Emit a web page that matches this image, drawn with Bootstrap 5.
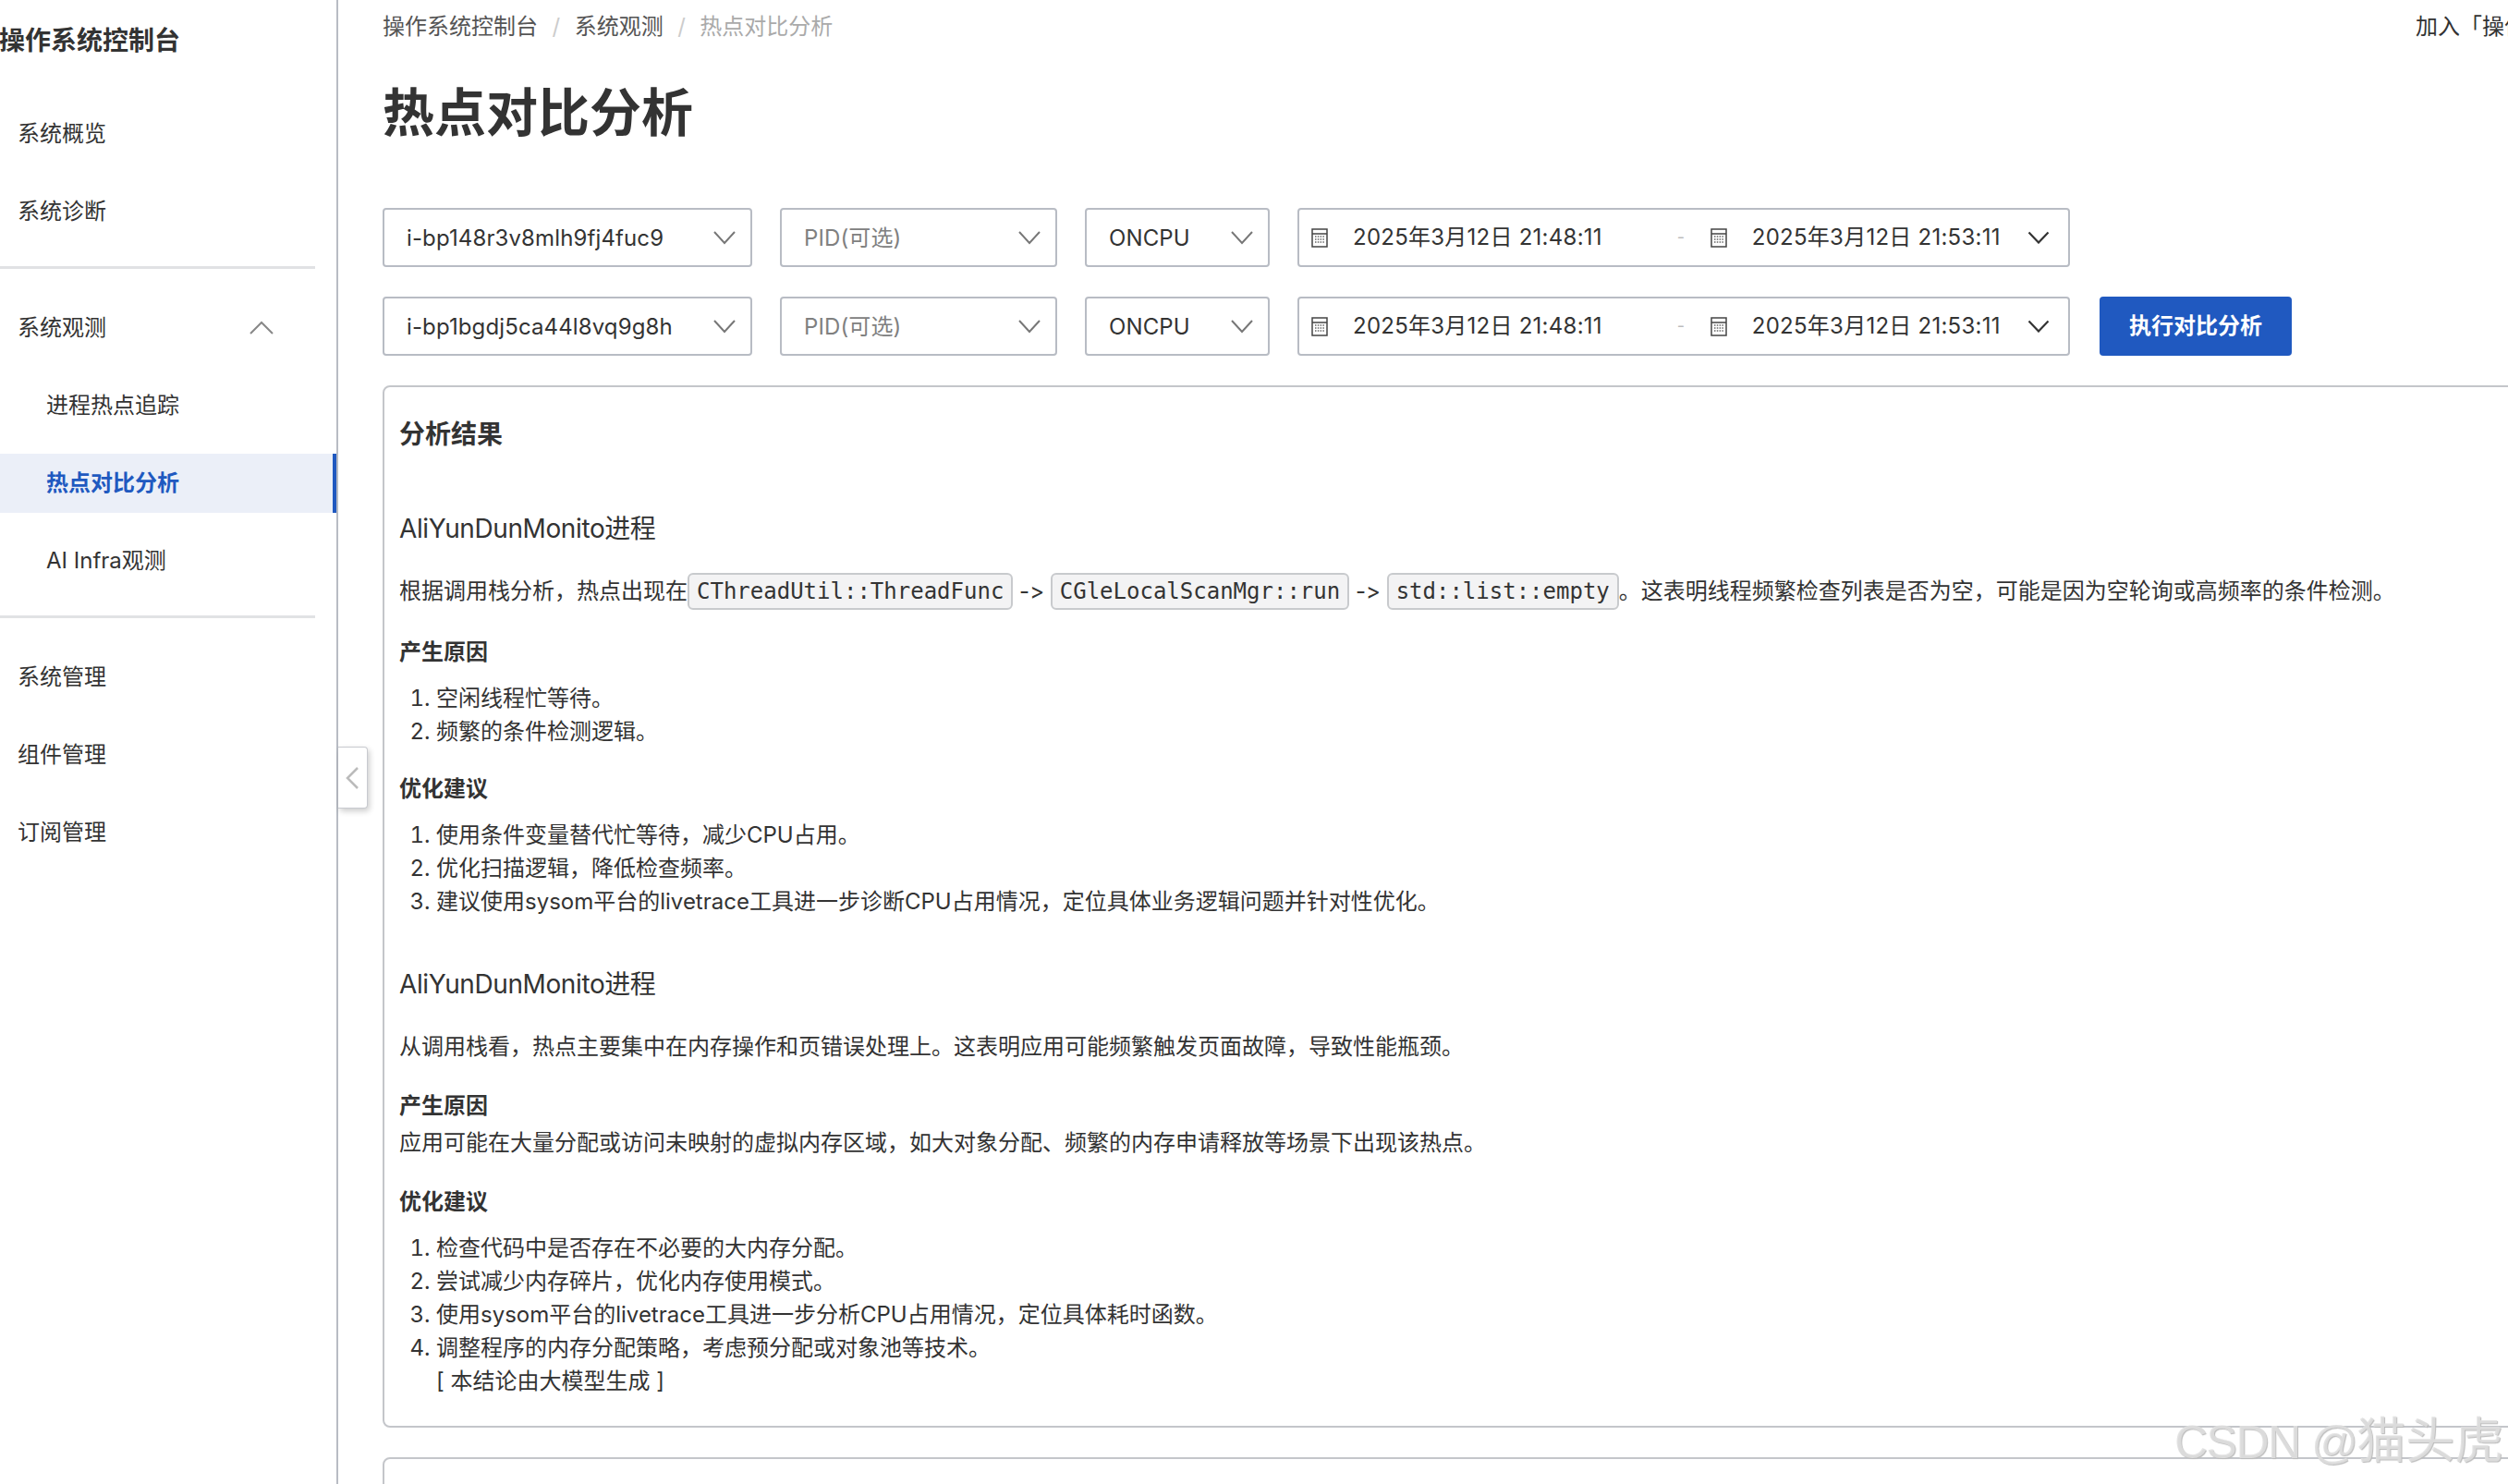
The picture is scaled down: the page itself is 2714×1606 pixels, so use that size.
<!DOCTYPE html>
<html lang="zh-CN">
<head>
    <meta charset="UTF-8">
    <meta name="viewport" content="width=device-width, initial-scale=1.0">
    <title>热点对比分析</title>
    <link href="https://cdn.jsdelivr.net/npm/bootstrap@5.3.0/dist/css/bootstrap.min.css" rel="stylesheet">
    <style>
        html, body { height: 1606px; overflow: hidden; }
        body { font-family: Inter, "Noto Sans CJK SC", sans-serif; font-size: 24px; line-height: 36px; color: #333; background: #fff; font-feature-settings: "calt" 0; }
        .shell { width: 3400px; height: 1606px; }
        /* 侧边栏 */
        .side { width: 366px; flex: none; border-right: 2px solid #b8bcc4; height: 100%; }
        .side-title { font-size: 28px; font-weight: 600; line-height: 40px; padding-top: 24px; height: 113px; margin-left: -1px; }
        .side-link { display: flex; align-items: center; justify-content: space-between; height: 64px; margin-bottom: 20px; padding: 0 68px 0 19px; color: #333; text-decoration: none; }
        .side-link.sub { padding-left: 50px; }
        .side-link.on { background: #ebeff8; color: #2059c0; font-weight: 600; border-right: 4px solid #2059c0; }
        .side-line { height: 3px; width: 341px; background: #e1e2e4; margin: 27px 0 32px; }
        .fold { position: absolute; left: 366px; top: 808px; width: 32px; height: 67px; padding-right: 2px; background: #fff; border: 1px solid #c8cacf; border-left: 0; border-radius: 0 4px 4px 0; box-shadow: 2px 3px 6px rgba(0,0,0,.2); }
        /* 主区 */
        .main-area { padding-left: 48px; flex: 1; }
        .breadcrumb { margin: 0; height: 58px; align-items: center; font-size: 24px; --bs-breadcrumb-divider-color: #ccc; --bs-breadcrumb-item-active-color: #aaa; --bs-breadcrumb-item-padding-x: 15.500px; }
        .breadcrumb a { color: #555; text-decoration: none; }
        .join-text { position: absolute; left: 2614px; top: 11px; white-space: nowrap; }
        .page-h { font-size: 56px; line-height: 76px; font-weight: 600; margin: 26px 0 65px; color: #333; }
        .filter-row { gap: 30px; height: 64px; margin-bottom: 32px; }
        .form-select { height: 64px; font-size: 24px; line-height: 36px; color: #333; padding: 1px 40px 0 24px; border: 2px solid #b8bcc4; border-radius: 4px; letter-spacing: .12px; background-size: 26px 26px; background-position: right 15px center;
            background-image: url("data:image/svg+xml,%3csvg xmlns='http://www.w3.org/2000/svg' viewBox='0 0 26 26'%3e%3cpath fill='none' stroke='%23777' stroke-width='2' d='M2 7l11 12L24 7'/%3e%3c/svg%3e"); }
        .sel-host { width: 400px; }
        .sel-pid { width: 300px; color: #808080; }
        .sel-cpu { width: 200px; }
        .range-box { width: 836px; height: 64px; border: 2px solid #b8bcc4; border-radius: 4px; padding: 0 20px 0 13px; background: #fff; }
        .range-time { white-space: nowrap; margin-left: 27px; letter-spacing: .25px; }
        .range-dash { color: #bbb; margin-left: 81px; margin-right: 26px; width: 10px; font-size: 18px; }
        .run-btn { width: 208px; height: 64px; margin-left: 2px; background: #2059c0; border: 0; border-radius: 4px; color: #fff; font-size: 24px; font-weight: 600; padding: 0; }
        /* 结果 */
        .result-box { width: 2900px; border: 2px solid #c4c6ca; border-radius: 8px; padding: 31px 16px 0; height: 1128px; margin-bottom: 32px; color: #333; }
        .result-box h5 { font-size: 28px; line-height: 40px; font-weight: 600; margin: 0 0 62px; }
        .result-box h6.proc { font-size: 28px; line-height: 40px; font-weight: 400; margin: 0 0 30px; letter-spacing: -.4px; }
        .result-box p { margin: 0; }
        .result-box .gap-a { margin-bottom: 28px; }
        .result-box p.reason { font-weight: 600; margin-bottom: 14px; }
        .result-box p.reason.tight { margin-bottom: 4px; }
        .result-box ol { margin: 0 0 26px; padding-left: 40px; }
        .result-box ol.last { margin-bottom: 51px; }
        code.fn { display: inline-block; font-family: "DejaVu Sans Mono", monospace; font-size: 24px; line-height: 36px; color: #333; background: #f3f3f4; border: 2px solid #c8cacd; border-radius: 6px; padding: 0 8px; height: 40px; vertical-align: middle; margin-top: -3px; }
        .watermark { position: absolute; left: 2353px; top: 1530px; font-family: "Liberation Sans", "Noto Sans CJK SC", sans-serif; font-size: 50px; line-height: 60px; letter-spacing: -1.500px; color: rgba(225,225,225,.85); white-space: nowrap; text-shadow: 1px 1px 1px #bbb; }
        .watermark span { font-size: 53px; letter-spacing: 0; }
    </style>
</head>
<body>
    <div class="shell d-flex">
        <!-- 侧边栏 -->
        <aside class="side">
            <div class="side-title">操作系统控制台</div>
            <a class="side-link" href="#">系统概览</a>
            <a class="side-link" href="#">系统诊断</a>
            <div class="side-line"></div>
            <a class="side-link" href="#">系统观测
                <svg width="26" height="16" viewBox="0 0 26 16"><path d="M1 14L13 2l12 12" fill="none" stroke="#888" stroke-width="2"/></svg>
            </a>
            <a class="side-link sub" href="#">进程热点追踪</a>
            <a class="side-link sub on" href="#">热点对比分析</a>
            <a class="side-link sub" href="#">AI Infra观测</a>
            <div class="side-line"></div>
            <a class="side-link" href="#">系统管理</a>
            <a class="side-link" href="#">组件管理</a>
            <a class="side-link" href="#">订阅管理</a>
        </aside>
        <div class="fold d-flex align-items-center justify-content-center">
            <svg width="16" height="26" viewBox="0 0 16 26"><path d="M14 2L3 13l11 11" fill="none" stroke="#bbb" stroke-width="2.5"/></svg>
        </div>

        <!-- 主区 -->
        <main class="main-area">
            <ol class="breadcrumb">
                <li class="breadcrumb-item"><a href="#">操作系统控制台</a></li>
                <li class="breadcrumb-item"><a href="#">系统观测</a></li>
                <li class="breadcrumb-item active">热点对比分析</li>
            </ol>
            <div class="join-text">加入「操作系统控制台」</div>
            <h1 class="page-h">热点对比分析</h1>

            <div class="filter-row d-flex">
                <select class="form-select sel-host"><option>i-bp148r3v8mlh9fj4fuc9</option></select>
                <select class="form-select sel-pid"><option>PID(可选)</option></select>
                <select class="form-select sel-cpu"><option>ONCPU</option></select>
                <div class="range-box d-flex align-items-center">
                    <svg width="18" height="21" viewBox="0 0 18 21"><path d="M1 1h16v19H1zM1 6h16" fill="none" stroke="#444" stroke-width="1.5"/><path d="M4 9h10M4 12h10M4 15h10" fill="none" stroke="#666" stroke-width="1.5" stroke-dasharray="1.5 1.3"/></svg>
                    <span class="range-time">2025年3月12日 21:48:11</span>
                    <span class="range-dash">-</span>
                    <svg width="18" height="21" viewBox="0 0 18 21"><path d="M1 1h16v19H1zM1 6h16" fill="none" stroke="#444" stroke-width="1.5"/><path d="M4 9h10M4 12h10M4 15h10" fill="none" stroke="#666" stroke-width="1.5" stroke-dasharray="1.5 1.3"/></svg>
                    <span class="range-time">2025年3月12日 21:53:11</span>
                    <svg class="ms-auto" width="24" height="14" viewBox="0 0 24 14"><path d="M1.500 1.500l10.500 11 10.500-11" fill="none" stroke="#333" stroke-width="2.2"/></svg>
                </div>
            </div>
            <div class="filter-row d-flex">
                <select class="form-select sel-host"><option>i-bp1bgdj5ca44l8vq9g8h</option></select>
                <select class="form-select sel-pid"><option>PID(可选)</option></select>
                <select class="form-select sel-cpu"><option>ONCPU</option></select>
                <div class="range-box d-flex align-items-center">
                    <svg width="18" height="21" viewBox="0 0 18 21"><path d="M1 1h16v19H1zM1 6h16" fill="none" stroke="#444" stroke-width="1.5"/><path d="M4 9h10M4 12h10M4 15h10" fill="none" stroke="#666" stroke-width="1.5" stroke-dasharray="1.5 1.3"/></svg>
                    <span class="range-time">2025年3月12日 21:48:11</span>
                    <span class="range-dash">-</span>
                    <svg width="18" height="21" viewBox="0 0 18 21"><path d="M1 1h16v19H1zM1 6h16" fill="none" stroke="#444" stroke-width="1.5"/><path d="M4 9h10M4 12h10M4 15h10" fill="none" stroke="#666" stroke-width="1.5" stroke-dasharray="1.5 1.3"/></svg>
                    <span class="range-time">2025年3月12日 21:53:11</span>
                    <svg class="ms-auto" width="24" height="14" viewBox="0 0 24 14"><path d="M1.500 1.500l10.500 11 10.500-11" fill="none" stroke="#333" stroke-width="2.2"/></svg>
                </div>
                <button class="btn run-btn" type="button">执行对比分析</button>
            </div>

            <div class="card result-box">
                <h5>分析结果</h5>
                <h6 class="proc">AliYunDunMonito进程</h6>
                <p class="gap-a">根据调用栈分析，热点出现在<code class="fn">CThreadUtil::ThreadFunc</code> -&gt; <code class="fn">CGleLocalScanMgr::run</code> -&gt; <code class="fn">std::list::empty</code>。这表明线程频繁检查列表是否为空，可能是因为空轮询或高频率的条件检测。</p>
                <p class="reason">产生原因</p>
                <ol>
                    <li>空闲线程忙等待。</li>
                    <li>频繁的条件检测逻辑。</li>
                </ol>
                <p class="reason">优化建议</p>
                <ol class="last">
                    <li>使用条件变量替代忙等待，减少CPU占用。</li>
                    <li>优化扫描逻辑，降低检查频率。</li>
                    <li>建议使用sysom平台的livetrace工具进一步诊断CPU占用情况，定位具体业务逻辑问题并针对性优化。</li>
                </ol>
                <h6 class="proc">AliYunDunMonito进程</h6>
                <p class="gap-a">从调用栈看，热点主要集中在内存操作和页错误处理上。这表明应用可能频繁触发页面故障，导致性能瓶颈。</p>
                <p class="reason tight">产生原因</p>
                <p class="gap-a">应用可能在大量分配或访问未映射的虚拟内存区域，如大对象分配、频繁的内存申请释放等场景下出现该热点。</p>
                <p class="reason">优化建议</p>
                <ol class="mb-0">
                    <li>检查代码中是否存在不必要的大内存分配。</li>
                    <li>尝试减少内存碎片，优化内存使用模式。</li>
                    <li>使用sysom平台的livetrace工具进一步分析CPU占用情况，定位具体耗时函数。</li>
                    <li>调整程序的内存分配策略，考虑预分配或对象池等技术。<br>[ 本结论由大模型生成 ]</li>
                </ol>
            </div>
            <div class="card result-box"></div>
        </main>
    </div>
    <div class="watermark">CSDN @<span>猫头虎</span></div>
    <script src="https://cdn.jsdelivr.net/npm/bootstrap@5.3.0/dist/js/bootstrap.bundle.min.js"></script>
</body>
</html>
